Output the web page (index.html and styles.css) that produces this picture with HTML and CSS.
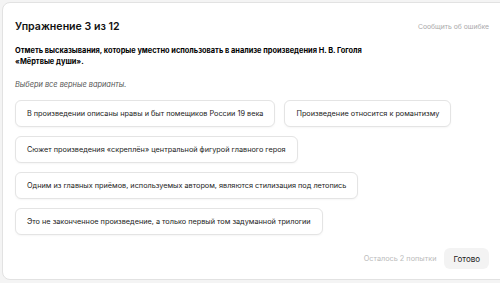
FILE: index.html
```html
<!DOCTYPE html>
<html lang="ru">
<head>
    <meta charset="UTF-8">
    <title>Упражнение 3 из 12</title>
    <link rel="stylesheet" href="styles.css">
</head>
<body>
    <div class="card">
        <div class="head">
            <h1>Упражнение 3 из 12</h1>
            <a class="report">Сообщить об ошибке</a>
        </div>

        <p class="question">Отметь высказывания, которые уместно использовать в анализе произведения Н. В. Гоголя<br>«Мёртвые души».</p>
        <p class="hint">Выбери все верные варианты.</p>

        <div class="options">
            <button class="option">В произведении описаны нравы и быт помещиков России 19 века</button>
            <button class="option">Произведение относится к романтизму</button>
            <button class="option">Сюжет произведения «скреплён» центральной фигурой главного героя</button>
            <button class="option">Одним из главных приёмов, используемых автором, являются стилизация под летопись</button>
            <button class="option">Это не законченное произведение, а только первый том задуманной трилогии</button>
        </div>

        <div class="foot">
            <span class="tries">Осталось 2 попытки</span>
            <button class="done">Готово</button>
        </div>
    </div>
</body>
</html>
```

FILE: styles.css
```css
* {
    margin: 0;
    padding: 0;
    box-sizing: border-box;
}
body {
    font-family: Inter, "Noto Sans", Arial, sans-serif;
    background-color: #f4f4f4;
    color: #222;
    overflow: hidden;
    height: 283px;
}
.card {
    background-color: #fff;
    border: 1px solid #e2e2e2;
    border-radius: 8px;
    width: 510px;
    height: 278px;
    margin: 2px 0 0 2px;
    padding: 13px 22px 0 12px;
}
.head {
    display: flex;
    justify-content: space-between;
    align-items: center;
    height: 20px;
}
h1 {
    font-size: 10.6px;
    font-weight: 600;
    color: #111;
}
.report {
    font-size: 6.8px;
    color: #aaa;
}
.question {
    margin-top: 9px;
    font-size: 7.4px;
    font-weight: 700;
    line-height: 11px;
    color: #000;
}
.hint {
    margin-top: 12px;
    font-size: 7.4px;
    font-style: italic;
    color: #555;
    line-height: 12px;
}
.options {
    display: flex;
    flex-wrap: wrap;
    gap: 9px;
    margin-top: 9px;
}
.option {
    font-family: inherit;
    height: 27px;
    padding: 0 11px;
    background-color: #fff;
    border: 1px solid #e4e4e4;
    border-radius: 6px;
    font-size: 7.3px;
    color: #222;
    box-shadow: 0 1px 2px rgba(0, 0, 0, 0.04);
}
.foot {
    display: flex;
    justify-content: flex-end;
    align-items: center;
    gap: 8px;
    margin-top: 13px;
}
.tries {
    font-size: 7.3px;
    color: #bbb;
}
.done {
    font-family: inherit;
    font-size: 8px;
    color: #222;
    background-color: #f3f3f3;
    border: none;
    border-radius: 6px;
    height: 21px;
    padding: 0 9px;
}
```
